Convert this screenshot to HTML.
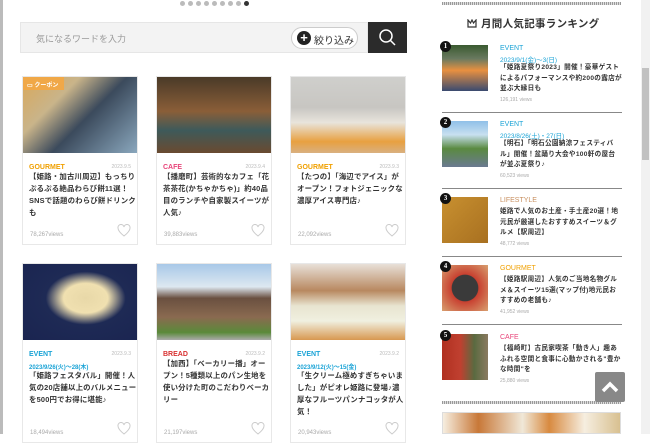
<!DOCTYPE html>
<html><head><meta charset="utf-8"><style>
*{margin:0;padding:0;box-sizing:border-box}
body{width:650px;height:434px;overflow:hidden;background:#fff;font-family:"Liberation Sans","Noto Sans CJK JP",sans-serif;position:relative;color:#333}
.abs{position:absolute}
.lb{left:0;top:0;width:3px;height:434px;background:#bbb}
.dots{left:180px;top:1px;display:flex;gap:3px}
.dots i{width:5px;height:5px;border-radius:50%;background:#bbb;display:block}
.search{left:20px;top:22px;width:348px;height:31px;background:#f3f3f3;border:1px solid #e6e6e6}
.search span{position:absolute;left:15px;top:9px;font-size:9px;color:#999}
.filter{left:291px;top:27px;width:67px;height:22px;border:1px solid #ccc;border-radius:11px;background:#fff;font-size:10px;color:#333;padding:4px 0 0 22px}
.filter b{position:absolute;left:5px;top:3px;width:14px;height:14px;border-radius:50%;background:#222;color:#fff;font-size:13px;line-height:13px;text-align:center;font-weight:bold}
.sbtn{left:368px;top:22px;width:39px;height:31px;background:#2b2b2b}
.card{width:116px;border:1px solid #e8e8e8;background:#fff}
.card .img{height:76px}
.cat{position:absolute;left:6px;top:87px;font-size:7px;font-weight:bold}
.dt{position:absolute;right:6px;top:87px;font-size:5px;color:#bbb}
.ev{position:absolute;left:6px;top:98px;font-size:6px;color:#1aa3d6;font-weight:bold}
.tt{position:absolute;left:6px;width:108px;font-size:7.4px;letter-spacing:0.2px;line-height:12px;font-weight:bold;color:#333}
.vw{position:absolute;left:7px;font-size:6px;color:#aaa}
.ht{position:absolute;right:6px;width:14px;height:13px}
.rk{left:442px;width:180px}
.rk .im{position:absolute;left:0;top:0;width:46px;height:46px}
.rk .n{position:absolute;left:-2px;top:-4px;width:11px;height:11px;border-radius:50%;background:#111;color:#fff;font-size:7px;text-align:center;line-height:11px;font-family:"Liberation Serif",serif;font-weight:bold}
.rk .c{position:absolute;left:58px;top:0;font-size:7px}
.rk .d{position:absolute;left:58px;top:9px;font-size:6.5px;color:#1aa3d6}
.rk .t{position:absolute;left:58px;width:122px;font-size:6.6px;letter-spacing:0.3px;line-height:10.5px;color:#333;font-weight:bold}
.rk .v{position:absolute;left:58px;font-size:5px;color:#aaa}
.sep{left:442px;width:180px;height:1px;background:#888}
</style></head><body>
<div class="abs lb"></div>
<div class="abs dots"><i></i><i></i><i></i><i></i><i></i><i></i><i></i><i></i><i style="background:#333"></i></div>
<div class="abs search"><span>気になるワードを入力</span></div>
<div class="abs filter"><b>+</b>絞り込み</div>
<div class="abs sbtn"><svg width="39" height="31"><circle cx="18" cy="14" r="6" fill="none" stroke="#fff" stroke-width="1.5"/><line x1="22.5" y1="18.5" x2="27" y2="23" stroke="#fff" stroke-width="1.5"/></svg></div>

<div class="abs card" style="left:22px;top:76px;height:169px">
<div class="img" style="background:linear-gradient(135deg,#d9a85a 0%,#c9b48a 30%,#3b4a5c 55%,#8aa7bd 100%)"></div>
<div class="abs" style="left:0;top:0;width:41px;height:13px;background:#f0a848;color:#fff;font-size:6px;padding:3px 0 0 4px;font-weight:bold">▭ クーポン</div>
<div class="cat" style="color:#f0a000">GOURMET</div><div class="dt">2023.9.5</div>
<div class="tt" style="top:94px">【姫路・加古川周辺】もっちりぷるぷる絶品わらび餅11選！SNSで話題のわらび餅ドリンクも</div>
<div class="vw" style="top:155px">78,267views</div>
<svg class="ht" style="top:147px" viewBox="0 0 14 13"><path d="M7 12C2 8 1 6 1 4a3 3 0 0 1 6-1 3 3 0 0 1 6 1c0 2-1 4-6 8z" fill="none" stroke="#ccc"/></svg>
</div>
<div class="abs card" style="left:156px;top:76px;height:169px">
<div class="img" style="background:linear-gradient(180deg,#4a3a28 0%,#8a5e38 45%,#3e5a5a 70%,#6a4a30 100%)"></div>
<div class="cat" style="color:#e8457a">CAFE</div><div class="dt">2023.9.4</div>
<div class="tt" style="top:94px">【播磨町】芸術的なカフェ「花茶茶花(かちゃかちゃ)」約40品目のランチや自家製スイーツが人気♪</div>
<div class="vw" style="top:155px">39,883views</div>
<svg class="ht" style="top:147px" viewBox="0 0 14 13"><path d="M7 12C2 8 1 6 1 4a3 3 0 0 1 6-1 3 3 0 0 1 6 1c0 2-1 4-6 8z" fill="none" stroke="#ccc"/></svg>
</div>
<div class="abs card" style="left:290px;top:76px;height:169px">
<div class="img" style="background:linear-gradient(180deg,#cfcfcc 0%,#c8c6c2 40%,#e8e4dc 60%,#e8a040 85%,#d9b080 100%)"></div>
<div class="cat" style="color:#f0a000">GOURMET</div><div class="dt">2023.9.3</div>
<div class="tt" style="top:94px">【たつの】「海辺でアイス」がオープン！フォトジェニックな濃厚アイス専門店♪</div>
<div class="vw" style="top:155px">22,092views</div>
<svg class="ht" style="top:147px" viewBox="0 0 14 13"><path d="M7 12C2 8 1 6 1 4a3 3 0 0 1 6-1 3 3 0 0 1 6 1c0 2-1 4-6 8z" fill="none" stroke="#ccc"/></svg>
</div>

<div class="abs card" style="left:22px;top:263px;height:180px">
<div class="img" style="background:radial-gradient(ellipse at 55% 45%,#e8d8a8 0%,#f0e0b0 25%,#1e2a55 45%,#1a2450 100%)"></div>
<div class="cat" style="color:#1aa3d6">EVENT</div><div class="dt">2023.9.3</div><div class="ev">2023/9/26(火)～28(木)</div>
<div class="tt" style="top:106px">「姫路フェスタバル」開催！人気の20店舗以上のバルメニューを500円でお得に堪能♪</div>
<div class="vw" style="top:166px">18,494views</div>
<svg class="ht" style="top:158px" viewBox="0 0 14 13"><path d="M7 12C2 8 1 6 1 4a3 3 0 0 1 6-1 3 3 0 0 1 6 1c0 2-1 4-6 8z" fill="none" stroke="#ccc"/></svg>
</div>
<div class="abs card" style="left:156px;top:263px;height:180px">
<div class="img" style="background:linear-gradient(180deg,#a8c8e8 0%,#dde8f0 30%,#6a5040 45%,#8a6a50 70%,#5a8a3a 90%,#aaa 100%)"></div>
<div class="cat" style="color:#d83030">BREAD</div><div class="dt">2023.9.2</div>
<div class="tt" style="top:94px">【加西】「ベーカリー播」オープン！5種類以上のパン生地を使い分けた町のこだわりベーカリー</div>
<div class="vw" style="top:166px">21,197views</div>
<svg class="ht" style="top:158px" viewBox="0 0 14 13"><path d="M7 12C2 8 1 6 1 4a3 3 0 0 1 6-1 3 3 0 0 1 6 1c0 2-1 4-6 8z" fill="none" stroke="#ccc"/></svg>
</div>
<div class="abs card" style="left:290px;top:263px;height:180px">
<div class="img" style="background:linear-gradient(180deg,#e8e0d8 0%,#b88860 35%,#e8e4d0 55%,#f0f0e0 75%,#d89850 100%)"></div>
<div class="cat" style="color:#1aa3d6">EVENT</div><div class="dt">2023.9.2</div><div class="ev">2023/9/12(火)～15(金)</div>
<div class="tt" style="top:106px">「生クリーム極めすぎちゃいました」がピオレ姫路に登場♪濃厚なフルーツパンナコッタが人気！</div>
<div class="vw" style="top:166px">20,943views</div>
<svg class="ht" style="top:158px" viewBox="0 0 14 13"><path d="M7 12C2 8 1 6 1 4a3 3 0 0 1 6-1 3 3 0 0 1 6 1c0 2-1 4-6 8z" fill="none" stroke="#ccc"/></svg>
</div>

<div class="abs" style="left:442px;top:2px;width:179px;height:3px;background:repeating-linear-gradient(90deg,#999 0 1px,#ddd 1px 2px)"></div>
<div class="abs" style="left:467px;top:16px;font-size:10.5px;font-weight:bold;color:#333;letter-spacing:0.3px"><svg width="10" height="9" style="vertical-align:-1px;margin-right:4px"><path d="M1 8V1l2.5 3L5 1l1.5 3L9 1v7z" fill="none" stroke="#333" stroke-width="1.2"/></svg>月間人気記事ランキング</div>

<div class="abs rk" style="top:45px;height:60px">
<div class="im" style="background:linear-gradient(180deg,#3a5a30 0%,#6a7a60 30%,#e89040 55%,#3a4a70 100%)"></div><div class="n">1</div>
<div class="c" style="color:#1aa3d6">EVENT</div><div class="d">2023/9/1(金)～3(日)</div>
<div class="t" style="top:18px">「姫路夏祭り2023」開催！豪華ゲストによるパフォーマンスや約200の露店が並ぶ大縁日も</div>
<div class="v" style="top:52px">126,191 views</div></div>
<div class="abs sep" style="top:112px"></div>
<div class="abs rk" style="top:121px;height:60px">
<div class="im" style="background:linear-gradient(180deg,#90c0e8 0%,#c8e0f0 30%,#5a8a40 60%,#6a7a90 100%)"></div><div class="n">2</div>
<div class="c" style="color:#1aa3d6">EVENT</div><div class="d">2023/8/26(土)・27(日)</div>
<div class="t" style="top:18px">【明石】「明石公園納涼フェスティバル」開催！盆踊り大会や100軒の屋台が並ぶ夏祭り♪</div>
<div class="v" style="top:52px">60,523 views</div></div>
<div class="abs sep" style="top:188px"></div>
<div class="abs rk" style="top:197px;height:50px">
<div class="im" style="background:linear-gradient(135deg,#c89030,#a87020)"></div><div class="n">3</div>
<div class="c" style="color:#c89060">LIFESTYLE</div>
<div class="t" style="top:10px">姫路で人気のお土産・手土産20選！地元民が厳選したおすすめスイーツ＆グルメ【駅周辺】</div>
<div class="v" style="top:44px">48,772 views</div></div>
<div class="abs sep" style="top:256px"></div>
<div class="abs rk" style="top:265px;height:50px">
<div class="im" style="background:radial-gradient(circle at 50% 50%,#3a3a3a 0 40%,#c84030 42%,#d8a070 100%)"></div><div class="n">4</div>
<div class="c" style="color:#f0a000">GOURMET</div>
<div class="t" style="top:10px">【姫路駅周辺】人気のご当地名物グルメ＆スイーツ15選(マップ付)地元民おすすめの老舗も♪</div>
<div class="v" style="top:44px">41,952 views</div></div>
<div class="abs sep" style="top:324px"></div>
<div class="abs rk" style="top:334px;height:50px">
<div class="im" style="background:linear-gradient(90deg,#b03020 0%,#c04030 40%,#5a6a40 70%,#8a7a60 100%)"></div><div class="n">5</div>
<div class="c" style="color:#e8457a">CAFE</div>
<div class="t" style="top:10px">【福崎町】古民家喫茶「動き人」趣あふれる空間と食事に心動かされる"豊かな時間"を</div>
<div class="v" style="top:44px">25,880 views</div></div>
<div class="abs" style="left:442px;top:401px;width:179px;height:3px;background:repeating-linear-gradient(90deg,#999 0 1px,#ddd 1px 2px)"></div>
<div class="abs" style="left:442px;top:412px;width:179px;height:22px;border:1px solid #ddd;background:linear-gradient(90deg,#f6eee0 0%,#c87838 20%,#f0e8d8 45%,#d88a40 60%,#f6eee0 80%,#d8c090 100%)"></div>
<div class="abs" style="left:595px;top:372px;width:30px;height:30px;background:#888;border-radius:2px"><svg width="30" height="30"><path d="M8 19l7-7 7 7" fill="none" stroke="#fff" stroke-width="3.5"/></svg></div>
<div class="abs" style="left:641px;top:0;width:9px;height:434px;background:#f1f1f1"></div>
<div class="abs" style="left:642px;top:68px;width:7px;height:92px;background:#c1c1c1"></div>
</body></html>
